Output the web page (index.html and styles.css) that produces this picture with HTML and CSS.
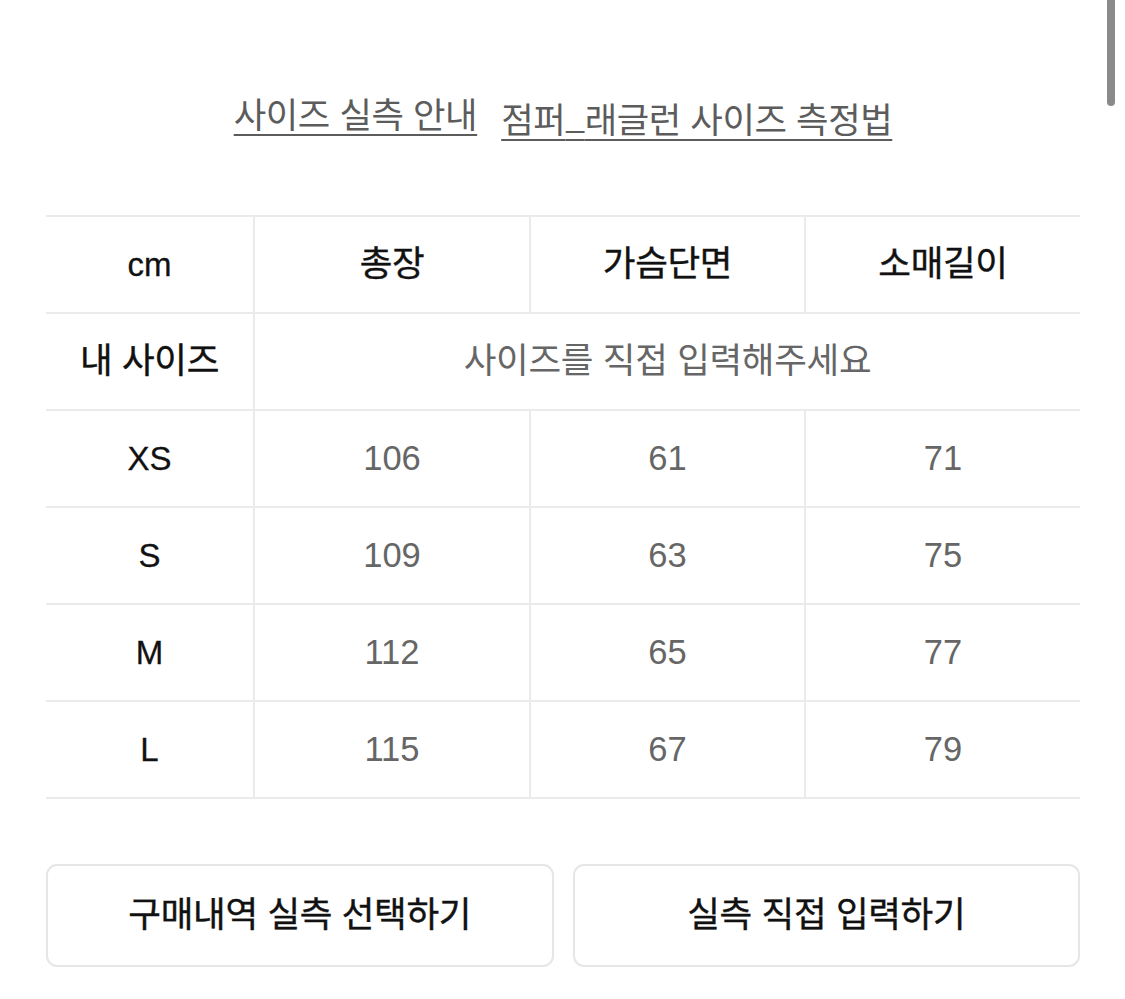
FILE: index.html
```html
<!DOCTYPE html>
<html lang="ko">
<head>
<meta charset="utf-8">
<title>사이즈 실측</title>
<link rel="stylesheet" href="styles.css">
</head>
<body>
<div class="page">
  <nav class="guide-links">
    <a class="guide-link" href="#">사이즈 실측 안내</a>
    <a class="guide-link" href="#">점퍼<span class="underscore">_</span>래글런 사이즈 측정법</a>
  </nav>

  <div class="size-table">
    <div class="row head">
      <div class="cell label">cm</div>
      <div class="cell ko strong">총장</div>
      <div class="cell ko strong">가슴단면</div>
      <div class="cell ko strong">소매길이</div>
    </div>
    <div class="row">
      <div class="cell ko strong">내 사이즈</div>
      <div class="cell ko span muted">사이즈를 직접 입력해주세요</div>
    </div>
    <div class="row">
      <div class="cell label">XS</div>
      <div class="cell value">106</div>
      <div class="cell value">61</div>
      <div class="cell value">71</div>
    </div>
    <div class="row">
      <div class="cell label">S</div>
      <div class="cell value">109</div>
      <div class="cell value">63</div>
      <div class="cell value">75</div>
    </div>
    <div class="row">
      <div class="cell label">M</div>
      <div class="cell value">112</div>
      <div class="cell value">65</div>
      <div class="cell value">77</div>
    </div>
    <div class="row last">
      <div class="cell label">L</div>
      <div class="cell value">115</div>
      <div class="cell value">67</div>
      <div class="cell value">79</div>
    </div>
  </div>

  <div class="actions">
    <button class="action-btn" type="button">구매내역 실측 선택하기</button>
    <button class="action-btn" type="button">실측 직접 입력하기</button>
  </div>
</div>
<div class="scroll-thumb"></div>
</body>
</html>
```

FILE: styles.css
```css
* { box-sizing: border-box; }

html, body {
  margin: 0;
  padding: 0;
  background: #ffffff;
}

body {
  font-family: "Liberation Sans", "Noto Sans CJK KR", sans-serif;
  color: #111111;
  width: 1125px;
  height: 999px;
  overflow: hidden;
}

.page {
  padding: 0 45px 0 46px;
}

.guide-links {
  display: flex;
  justify-content: center;
  gap: 24px;
  padding-top: 90px;
  height: 215px;
}

.guide-link {
  font-family: "Noto Sans CJK KR", sans-serif;
  font-size: 35.3px;
  line-height: 46px;
  height: 46px;
  color: #5c5c5c;
  text-decoration: underline;
  text-decoration-color: #5c5c5c;
  text-decoration-thickness: 2px;
  text-underline-offset: 6px;
  letter-spacing: -0.4px;
}

.underscore {
  vertical-align: 5px;
}

.size-table {
  border-top: 2px solid #ebebeb;
}

.row {
  display: grid;
  grid-template-columns: 207px 276px 275px 1fr;
  height: 97px;
  border-bottom: 2px solid #ebebeb;
}

.cell {
  display: flex;
  align-items: center;
  justify-content: center;
  font-size: 33px;
  border-left: 2px solid #ebebeb;
}

.cell:first-child {
  border-left: none;
}

.cell.label {
  color: #111111;
  -webkit-text-stroke: 0.3px #111111;
}

.cell.ko {
  font-family: "Noto Sans CJK KR", sans-serif;
  font-size: 35.5px;
  letter-spacing: -0.3px;
  padding-bottom: 8px;
}

.cell.strong {
  color: #111111;
  -webkit-text-stroke: 0.4px #111111;
}

.cell.span {
  grid-column: 2 / 5;
}

.cell.muted {
  color: #666666;
}

.cell.value {
  color: #666666;
  font-size: 34.5px;
}

.actions {
  display: grid;
  grid-template-columns: 1fr 1fr;
  gap: 19px;
  margin-top: 65px;
}

.action-btn {
  height: 103px;
  background: #ffffff;
  border: 2px solid #e6e6e6;
  border-radius: 11px;
  font-family: "Noto Sans CJK KR", sans-serif;
  font-size: 35.5px;
  color: #111111;
  -webkit-text-stroke: 0.4px #111111;
  letter-spacing: -0.3px;
  padding: 0 0 8px;
}

.scroll-thumb {
  position: absolute;
  top: -6px;
  left: 1107px;
  width: 8px;
  height: 112px;
  border-radius: 4px;
  background: #8a8a8a;
}
```
